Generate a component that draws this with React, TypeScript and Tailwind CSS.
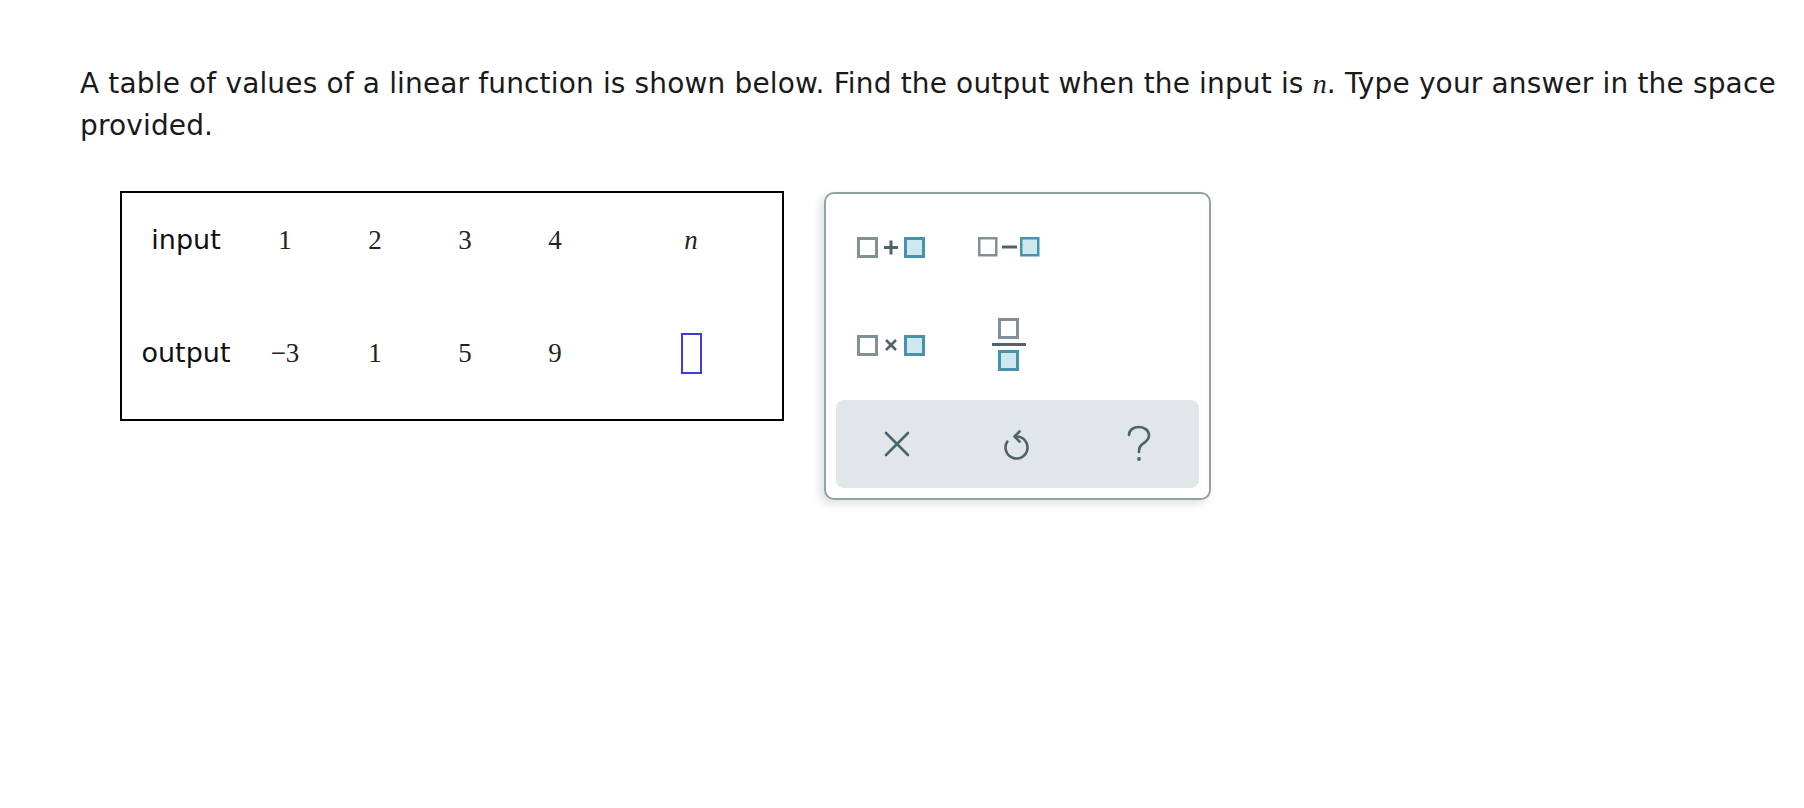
import React from "react";

const GRAY = "#7f9196";
const DARK = "#4e646b";
const BLUE = "#4792ad";
const FILL = "#cfe7ef";

function PlusIcon() {
  return (
    <svg width="68" height="21" viewBox="0 0 68 21">
      <rect x="1.5" y="1.5" width="18" height="18" fill="none" stroke={GRAY} strokeWidth="3" />
      <line x1="27" y1="10.5" x2="41" y2="10.5" stroke={DARK} strokeWidth="3" />
      <line x1="34" y1="3.5" x2="34" y2="17.5" stroke={DARK} strokeWidth="3" />
      <rect x="48.5" y="1.5" width="18" height="18" fill={FILL} stroke={BLUE} strokeWidth="3" />
    </svg>
  );
}

function MinusIcon() {
  return (
    <svg width="62" height="20" viewBox="0 0 62 20">
      <rect x="1.25" y="1.25" width="17" height="17" fill="none" stroke={GRAY} strokeWidth="2.5" />
      <line x1="24" y1="10" x2="39" y2="10" stroke={DARK} strokeWidth="3" />
      <rect x="43.25" y="1.25" width="17" height="17" fill={FILL} stroke={BLUE} strokeWidth="2.5" />
    </svg>
  );
}

function TimesIcon() {
  return (
    <svg width="68" height="21" viewBox="0 0 68 21">
      <rect x="1.5" y="1.5" width="18" height="18" fill="none" stroke={GRAY} strokeWidth="3" />
      <line x1="29" y1="5" x2="39" y2="15" stroke={DARK} strokeWidth="2.6" />
      <line x1="39" y1="5" x2="29" y2="15" stroke={DARK} strokeWidth="2.6" />
      <rect x="48.5" y="1.5" width="18" height="18" fill={FILL} stroke={BLUE} strokeWidth="3" />
    </svg>
  );
}

function FracIcon() {
  return (
    <svg width="34" height="54" viewBox="0 0 34 54">
      <rect x="7.5" y="1.5" width="18" height="18" fill="none" stroke={GRAY} strokeWidth="3" />
      <line x1="0" y1="26.5" x2="34" y2="26.5" stroke={DARK} strokeWidth="3" />
      <rect x="7.5" y="33.5" width="18" height="18" fill={FILL} stroke={BLUE} strokeWidth="3" />
    </svg>
  );
}

function XIcon() {
  return (
    <svg width="26" height="26" viewBox="0 0 26 26">
      <line x1="2" y1="2" x2="24" y2="24" stroke={DARK} strokeWidth="2.6" strokeLinecap="round" />
      <line x1="24" y1="2" x2="2" y2="24" stroke={DARK} strokeWidth="2.6" strokeLinecap="round" />
    </svg>
  );
}

function UndoIcon() {
  return (
    <svg width="28" height="34" viewBox="0 0 28 34" fill="none">
      <path d="M12 9.5 A11 11 0 1 1 3.3 14.5" stroke={DARK} strokeWidth="2.6" strokeLinecap="round" />
      <path d="M15.5 4.5 L10.5 9.5 L15.5 14.5" stroke={DARK} strokeWidth="2.6" strokeLinecap="round" strokeLinejoin="round" />
    </svg>
  );
}

function QuestionIcon() {
  return (
    <svg width="26" height="38" viewBox="0 0 26 38" fill="none">
      <path
        d="M3 10 C3 5 7.5 2 13 2 C18.5 2 23 5.5 23 10.5 C23 15 19.5 17 16.5 19 C14 20.7 13 22.5 13 25.5 L13 27"
        stroke={DARK}
        strokeWidth="2.6"
        strokeLinecap="round"
      />
      <circle cx="13" cy="34" r="1.9" fill={DARK} />
    </svg>
  );
}

const labelCls = "font-['DejaVu_Sans',sans-serif] text-[27px] text-[#111]";
const numCls = "font-['Liberation_Serif',serif] text-[27px] text-[#222]";
const cell = "flex items-center justify-center pb-[18px]";

export default function App() {
  return (
    <div className="min-h-[808px] bg-white pl-[80px] pr-[10px] pt-[63px] text-[#1a1a1a]">
      <p className="font-['DejaVu_Sans',sans-serif] text-[28px] leading-[42px] tracking-[0.15px]">
        <span>A table of values of a linear function is shown below. Find the output when the input is </span>
        <i className="font-['Liberation_Serif',serif] text-[28px] leading-[42px]">n</i>
        <span>. Type your answer in the space</span> <span>provided.</span>
      </p>
      <div className="mt-[44px] ml-[40px] flex items-start gap-[40px]">
        <div className="w-[664px] border-2 border-black">
          <div className="grid grid-cols-[118px_90px_90px_90px_90px_1fr] grid-rows-[113px_113px]">
            <div className={cell + " pl-[10px]"}>
              <span className={labelCls}>input</span>
            </div>
            <div className={cell}><span className={numCls}>1</span></div>
            <div className={cell}><span className={numCls}>2</span></div>
            <div className={cell}><span className={numCls}>3</span></div>
            <div className={cell}><span className={numCls}>4</span></div>
            <div className={cell}><span className={numCls + " italic"}>n</span></div>

            <div className={cell + " pl-[10px]"}>
              <span className={labelCls}>output</span>
            </div>
            <div className={cell}><span className={numCls}>−3</span></div>
            <div className={cell}><span className={numCls}>1</span></div>
            <div className={cell}><span className={numCls}>5</span></div>
            <div className={cell}><span className={numCls}>9</span></div>
            <div className={cell}>
              <div className="h-[41px] w-[21px] border-2 border-[#3c3cd8]" />
            </div>
          </div>
        </div>

        <div className="mt-[1px] flex w-[387px] flex-col rounded-[10px] border-2 border-[#93a2a6] bg-white px-[10px] pb-[10px] pt-[4px] shadow-[-4px_4px_10px_rgba(0,0,0,0.12)]">
          <div className="ml-[-4px] grid grid-cols-[118px_118px] grid-rows-[98px_98px]">
            <div className="flex items-center justify-center"><PlusIcon /></div>
            <div className="flex items-center justify-center"><MinusIcon /></div>
            <div className="flex items-center justify-center"><TimesIcon /></div>
            <div className="flex items-center justify-center"><FracIcon /></div>
          </div>
          <div className="mt-[6px] grid h-[88px] grid-cols-3 rounded-[8px] bg-[#e1e6e9]">
            <div className="flex items-center justify-center"><XIcon /></div>
            <div className="flex items-center justify-center"><UndoIcon /></div>
            <div className="flex items-center justify-center"><QuestionIcon /></div>
          </div>
        </div>
      </div>
    </div>
  );
}
